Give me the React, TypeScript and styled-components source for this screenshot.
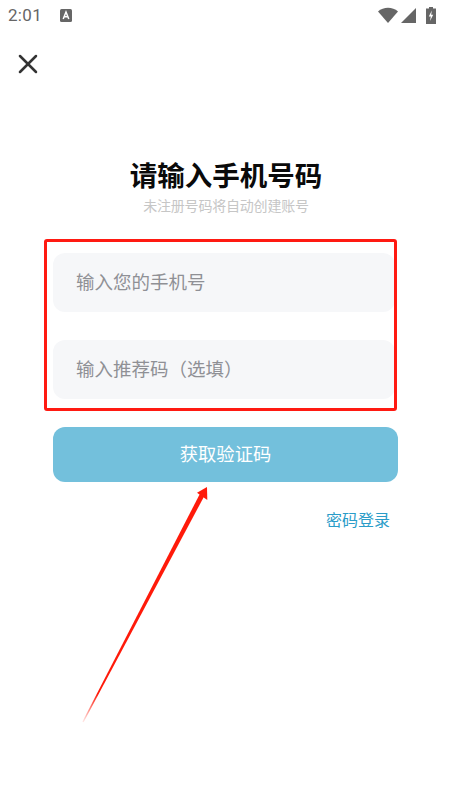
import styled, { createGlobalStyle } from "styled-components"
import { X } from "lucide-react"

const GlobalStyle = createGlobalStyle`
  html, body {
    margin: 0;
    padding: 0;
    background: #ffffff;
  }
  * {
    box-sizing: border-box;
  }
`

function App() {
  return (
    <Page>
      <GlobalStyle />
      <StatusBar>
        <StatusTime>2:01</StatusTime>
        <StatusBadge viewBox="0 0 12 13">
          <rect width="12" height="13" rx="1.5" fill="#666" />
          <path d="M3.2 10 L6 3 L8.8 10 M4.2 7.8 H7.8" stroke="#fff" strokeWidth="1.5" fill="none" />
        </StatusBadge>
        <StatusIcons>
          <svg width="20" height="16" viewBox="0 0 20 16">
            <path d="M0 4.5 C5.5 -0.5 14.5 -0.5 20 4.5 L10 16 Z" fill="#666" />
          </svg>
          <svg width="15" height="15" viewBox="0 0 15 15">
            <path d="M0 15 L15 0 V15 Z" fill="#666" />
          </svg>
          <BatteryIcon width="10" height="17" viewBox="0 0 10 17">
            <path d="M3 0 H7 V1.5 H10 V17 H0 V1.5 H3 Z" fill="#666" />
            <path d="M5.8 3.5 L2.8 9.5 H4.8 L4 14 L7.2 7.8 H5.2 Z" fill="#fff" />
          </BatteryIcon>
        </StatusIcons>
      </StatusBar>

      <CloseButton>
        <X size={32} strokeWidth={1.9} color="#333" />
      </CloseButton>

      <Title>请输入手机号码</Title>
      <Subtitle>未注册号码将自动创建账号</Subtitle>

      <Form>
        <Field>输入您的手机号</Field>
        <Field>输入推荐码（选填）</Field>
        <FieldsMark />
      </Form>

      <SubmitButton>获取验证码</SubmitButton>
      <PasswordLogin>密码登录</PasswordLogin>

      <ArrowMark width="140" height="250" viewBox="0 0 140 250">
        <defs>
          <linearGradient id="tail" gradientUnits="userSpaceOnUse" x1="9" y1="238" x2="24" y2="210">
            <stop offset="0" stopColor="#ff1a0a" stopOpacity="0.1" />
            <stop offset="1" stopColor="#ff1a0a" />
          </linearGradient>
        </defs>
        <path d="M8.4 237.7 L125.8 10 L130.2 12.2 L9.6 238.3 Z" fill="url(#tail)" />
        <path d="M133 3 L133.3 16 L123 8.7 Z" fill="#ff1a0a" />
      </ArrowMark>
    </Page>
  )
}

export default App

const Page = styled.div`
  position: relative;
  width: 450px;
  height: 800px;
  overflow: hidden;
  background: #ffffff;
  font-family: "Noto Sans CJK SC", "Liberation Sans", sans-serif;
`

const StatusBar = styled.div`
  display: flex;
  align-items: center;
  height: 30px;
  padding: 0 10px 0 8px;
`

const StatusTime = styled.span`
  font-family: Roboto, "Liberation Sans", sans-serif;
  font-size: 17px;
  color: #666;
  letter-spacing: 0.3px;
`

const StatusBadge = styled.svg`
  width: 12px;
  height: 13px;
  margin-left: 18px;
`

const StatusIcons = styled.div`
  display: flex;
  align-items: center;
  gap: 3px;
  margin-left: auto;
  margin-right: 4px;
`

const BatteryIcon = styled.svg`
  margin-left: 7px;
`

const CloseButton = styled.div`
  display: flex;
  height: 32px;
  margin-top: 18px;
  padding-left: 12px;
`

const Title = styled.h1`
  margin: 74px 0 1px;
  padding-left: 2px;
  font-size: 27.5px;
  line-height: 40px;
  font-weight: 700;
  color: #0a0a0a;
  text-align: center;
`

const Subtitle = styled.p`
  margin: 0;
  padding-left: 2px;
  font-size: 14px;
  line-height: 20px;
  letter-spacing: -0.2px;
  color: #c6c6c6;
  text-align: center;
`

const Form = styled.div`
  position: relative;
  display: flex;
  flex-direction: column;
  gap: 28px;
  margin: 38px 55px 0 53px;
`

const Field = styled.div`
  display: flex;
  align-items: center;
  height: 59px;
  padding: 0 0 3px 23px;
  border-radius: 12px;
  background: #f6f7f9;
  font-size: 18.5px;
  color: #8f9095;
`

const FieldsMark = styled.div`
  position: absolute;
  top: -14px;
  left: -9px;
  width: 353px;
  height: 172px;
  border: 3px solid #ff1a12;
  border-radius: 3px;
`

const SubmitButton = styled.div`
  display: flex;
  align-items: center;
  justify-content: center;
  height: 55px;
  margin: 28px 52px 0 53px;
  padding-bottom: 3px;
  border-radius: 12px;
  background: #73c0dc;
  font-size: 18.3px;
  color: #ffffff;
`

const PasswordLogin = styled.div`
  margin: 25px 60px 0 0;
  font-size: 16px;
  line-height: 24px;
  color: #2a9cc8;
  text-align: right;
`

const ArrowMark = styled.svg`
  position: absolute;
  top: 484px;
  left: 74px;
`
